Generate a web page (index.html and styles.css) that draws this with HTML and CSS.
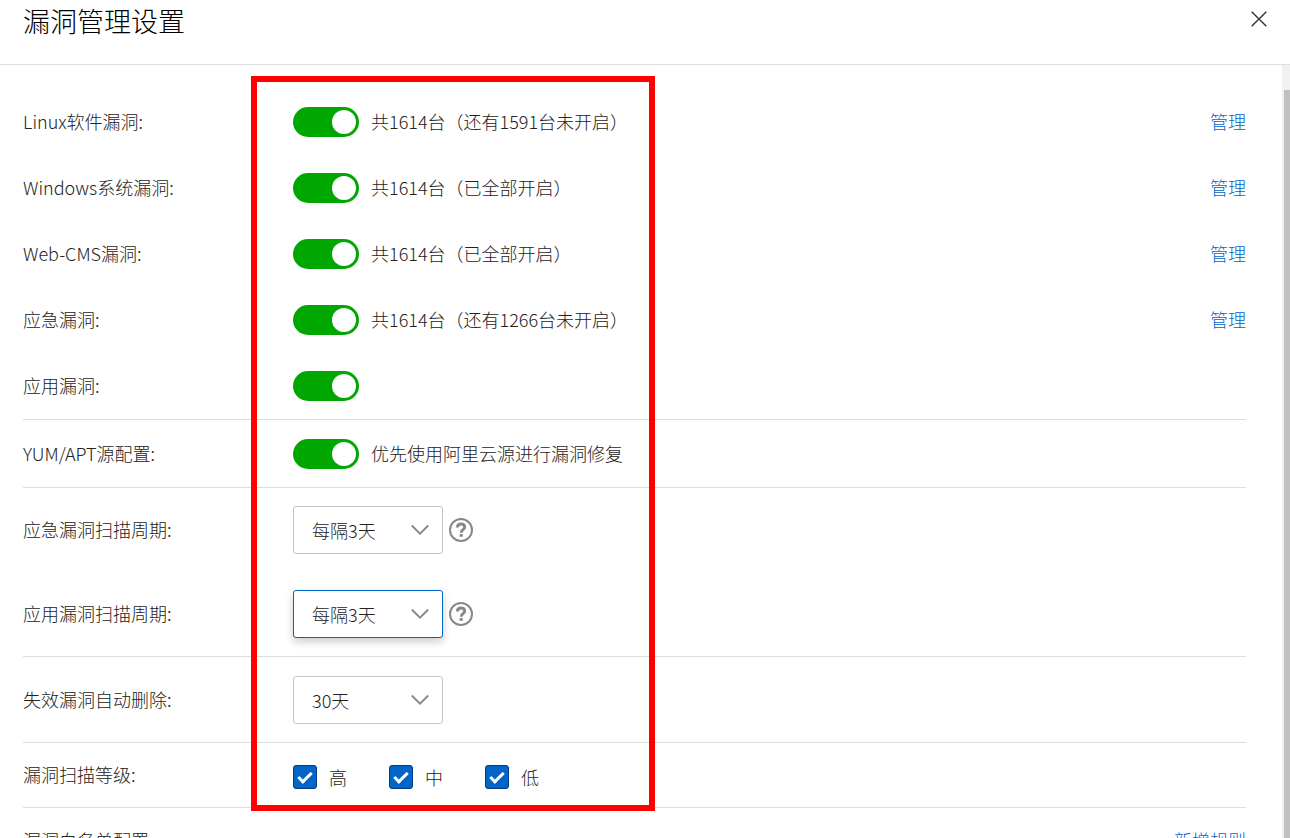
FILE: index.html
```html
<!DOCTYPE html>
<html lang="zh-CN">
<head>
    <meta charset="UTF-8">
    <meta name="viewport" content="width=device-width, initial-scale=1.0">
    <title>漏洞管理设置</title>
    <link rel="stylesheet" href="styles.css">
</head>
<body>

<svg class="sprite" aria-hidden="true">
    <symbol id="icon-arrow" viewBox="0 0 18 12">
        <path d="M.8 1.5 9 9.7 17.2 1.5" fill="none" stroke="#888" stroke-width="1.8"/>
    </symbol>
    <symbol id="icon-help" viewBox="0 0 24 24">
        <circle cx="12" cy="12" r="11" fill="none" stroke="#888" stroke-width="2"/>
        <path d="M8.4 9.4C8.4 7.2 9.9 6 12.1 6s3.6 1.2 3.6 3.1c0 2.7-3.5 2.6-3.5 5.6" fill="none" stroke="#888" stroke-width="2.9"/>
        <rect x="10.7" y="16" width="3" height="2.8" fill="#888"/>
    </symbol>
</svg>

<div class="drawer">
    <header class="drawer-header">
        <h1>漏洞管理设置</h1>
        <button type="button" class="close" aria-label="关闭">
            <svg width="16" height="16" viewBox="0 0 16 16"><path d="M.7.7 15.3 15.3M15.3.7.7 15.3" stroke="#333" stroke-width="1.4"/></svg>
        </button>
    </header>

    <div class="drawer-body">
        <main class="settings">
            <div class="marked">
                <section class="group">
                    <div class="row">
                        <label class="name" for="linux">Linux软件漏洞:</label>
                        <div class="value"><input type="checkbox" class="switch" id="linux" checked><span class="text">共1614台（还有1591台未开启）</span></div>
                        <a href="#">管理</a>
                    </div>
                    <div class="row">
                        <label class="name" for="windows">Windows系统漏洞:</label>
                        <div class="value"><input type="checkbox" class="switch" id="windows" checked><span class="text">共1614台（已全部开启）</span></div>
                        <a href="#">管理</a>
                    </div>
                    <div class="row">
                        <label class="name" for="webcms">Web-CMS漏洞:</label>
                        <div class="value"><input type="checkbox" class="switch" id="webcms" checked><span class="text">共1614台（已全部开启）</span></div>
                        <a href="#">管理</a>
                    </div>
                    <div class="row">
                        <label class="name" for="emergency">应急漏洞:</label>
                        <div class="value"><input type="checkbox" class="switch" id="emergency" checked><span class="text">共1614台（还有1266台未开启）</span></div>
                        <a href="#">管理</a>
                    </div>
                    <div class="row">
                        <label class="name" for="app">应用漏洞:</label>
                        <div class="value"><input type="checkbox" class="switch" id="app" checked></div>
                    </div>
                </section>

                <section class="group spaced">
                    <div class="row">
                        <label class="name" for="yum">YUM/APT源配置:</label>
                        <div class="value"><input type="checkbox" class="switch" id="yum" checked><span class="text">优先使用阿里云源进行漏洞修复</span></div>
                    </div>
                </section>

                <section class="group">
                    <div class="row tall">
                        <label class="name" for="emergency-cycle">应急漏洞扫描周期:</label>
                        <div class="value">
                            <div class="select">
                                <select id="emergency-cycle"><option>每隔3天</option></select>
                                <svg class="arrow"><use href="#icon-arrow"/></svg>
                            </div>
                            <svg class="help"><use href="#icon-help"/></svg>
                        </div>
                    </div>
                    <div class="row tall">
                        <label class="name" for="app-cycle">应用漏洞扫描周期:</label>
                        <div class="value">
                            <div class="select active">
                                <select id="app-cycle"><option>每隔3天</option></select>
                                <svg class="arrow"><use href="#icon-arrow"/></svg>
                            </div>
                            <svg class="help"><use href="#icon-help"/></svg>
                        </div>
                    </div>
                </section>

                <section class="group spaced">
                    <div class="row tall">
                        <label class="name" for="auto-delete">失效漏洞自动删除:</label>
                        <div class="value">
                            <div class="select">
                                <select id="auto-delete"><option>30天</option></select>
                                <svg class="arrow"><use href="#icon-arrow"/></svg>
                            </div>
                        </div>
                    </div>
                </section>

                <section class="group">
                    <div class="row levels">
                        <span class="name" id="level-name">漏洞扫描等级:</span>
                        <div class="value" role="group" aria-labelledby="level-name">
                            <label class="check"><input type="checkbox" checked>高</label>
                            <label class="check"><input type="checkbox" checked>中</label>
                            <label class="check"><input type="checkbox" checked>低</label>
                        </div>
                    </div>
                </section>
            </div>

            <div class="row">
                <span class="name">漏洞白名单配置:</span>
                <div class="value"></div>
                <a href="#">新增规则</a>
            </div>
        </main>
        <div class="scrollbar"><div class="thumb"></div></div>
    </div>
</div>

</body>
</html>
```
FILE: styles.css
```css
*, *::before, *::after {
    box-sizing: border-box;
}
body {
    margin: 0;
    font-family: "Noto Sans CJK SC", sans-serif;
    font-size: 18px;
    font-weight: 300;
    line-height: 24px;
    color: #222;
    background: #fff;
}
.sprite {
    display: none;
}
.drawer {
    display: flex;
    flex-direction: column;
    height: 100vh;
    overflow: hidden;
}
.drawer-header {
    display: flex;
    justify-content: space-between;
    align-items: flex-start;
    padding: 0 20px 22px 23px;
    border-bottom: 1px solid #dedede;
}
h1 {
    margin: 0;
    font-size: 27px;
    font-weight: 300;
    line-height: 42px;
    color: #000;
}
.close {
    display: flex;
    margin-top: 8px;
    padding: 3px;
    border: 0;
    background: none;
    cursor: pointer;
}
.drawer-body {
    flex: 1;
    min-height: 0;
    display: flex;
}
.settings {
    flex: 1;
    padding: 24px 36px 0 23px;
    overflow: hidden;
}

/* red frame round the settings column */
.marked {
    position: relative;
}
.marked::after {
    content: "";
    position: absolute;
    top: -13px;
    bottom: -3px;
    left: 228px;
    width: 404px;
    border: 6px solid #f00;
    pointer-events: none;
}

.group {
    border-bottom: 1px solid #dedede;
}
.group.spaced {
    padding-top: 1px;
}
.row {
    display: flex;
    align-items: center;
    min-height: 66px;
}
.row.tall {
    min-height: 84px;
}
.row.levels {
    min-height: 64px;
}
.name {
    flex: 0 0 270px;
}
.value {
    flex: 1;
    display: flex;
    align-items: center;
}
.name, .text, a {
    padding-bottom: 2px;
}
a {
    color: #0064c8;
    text-decoration: none;
}

.switch {
    appearance: none;
    width: 66px;
    height: 30px;
    margin: 0 12px 0 0;
    padding: 3px;
    border-radius: 15px;
    background: #ccc;
    cursor: pointer;
}
.switch::before {
    content: "";
    display: block;
    width: 24px;
    height: 24px;
    border-radius: 50%;
    background: #fff;
}
.switch:checked {
    background: #00a700;
}
.switch:checked::before {
    margin-left: auto;
}

.select {
    position: relative;
    width: 150px;
    margin-right: 6px;
}
select {
    appearance: none;
    display: block;
    width: 100%;
    height: 48px;
    padding: 0 40px 0 18px;
    border: 1px solid #c0c6cc;
    border-radius: 3px;
    background: #fff;
    font: inherit;
    color: #222;
}
.select.active select {
    border-color: #0064c8;
    box-shadow: 0 4px 8px rgba(0, 0, 0, 0.2);
}
.arrow {
    position: absolute;
    top: 18px;
    right: 14px;
    width: 18px;
    height: 12px;
    pointer-events: none;
}
.help {
    width: 24px;
    height: 24px;
}

.check {
    display: flex;
    align-items: center;
    gap: 12px;
    width: 96px;
    padding-top: 4px;
}
.check input {
    appearance: none;
    display: flex;
    justify-content: center;
    width: 24px;
    height: 24px;
    margin: 0;
    border: 1px solid #003f80;
    border-radius: 3px;
    background: #fff;
}
.check input:checked {
    background: #0064c8;
}
.check input:checked::before {
    content: "";
    width: 8px;
    height: 14px;
    margin-top: 3px;
    border: solid #fff;
    border-width: 0 3px 3px 0;
    transform: rotate(45deg);
}

.scrollbar {
    width: 8px;
    padding: 25px 0 0 2px;
    background: #f1f1f1;
}
.thumb {
    height: 100%;
    background: #c1c1c1;
}
```
